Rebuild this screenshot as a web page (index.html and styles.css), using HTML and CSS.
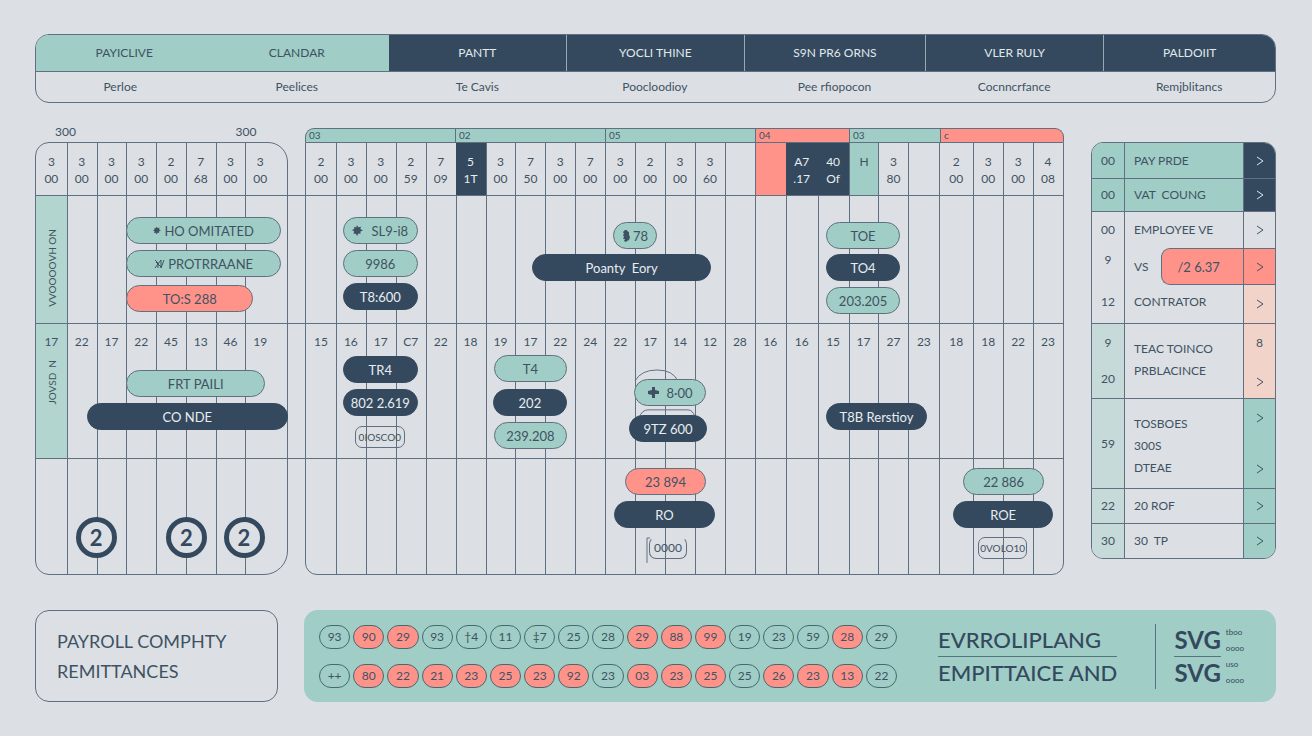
FILE: index.html
```html
<!DOCTYPE html>
<html lang="en">
<head>
<meta charset="utf-8">
<meta name="viewport" content="width=device-width, initial-scale=1">
<title>Payroll calendar</title>
<link rel="stylesheet" href="styles.css">
</head>
<body>
<svg class="defs" aria-hidden="true">
  <symbol id="chevron" viewBox="0 0 8 10"><path d="M1 1l6 4-6 4" fill="none" stroke="currentColor" stroke-width="1"/></symbol>
  <symbol id="spark" viewBox="0 0 10 10"><path d="M4.500 0l1.200 2 2.500-.3-.6 2L10 4.900l-2.400 1 .2 2-2-.2L4.600 10 3.500 7.900l-2.200.1.700-2L0 4.600l2-.9L2 1.700l1.800.5z" fill="currentColor"/></symbol>
</svg>
<div class="page">
  <table class="phases">
    <colgroup><col class="c-a"><col class="c-a"><col class="c-a"><col class="c-b"><col class="c-c"><col class="c-b"><col></colgroup>
    <thead><tr>
      <th class="green">PAYICLIVE</th><th class="green">CLANDAR</th><th>PANTT</th><th>YOCLI THINE</th><th>S9N PR6 ORNS</th><th>VLER RULY</th><th>PALDOIIT</th>
    </tr></thead>
    <tbody><tr>
      <td>Perloe</td><td>Peelices</td><td>Te Cavis</td><td>Poocloodioy</td><td>Pee rfiopocon</td><td>Cocnncrfance</td><td>Remjblitancs</td>
    </tr></tbody>
  </table>

  <main class="main">
    <section class="panel panel-left">
      <div class="marks cols"><span>300</span><span>300</span></div>
      <div class="board">
        <div class="rules cols"><i></i><i></i><i></i><i></i><i></i><i></i><i></i><i></i></div>
        <div class="head cols">
          <span>3<br>00</span><span>3<br>00</span><span>3<br>00</span><span>3<br>00</span><span>2<br>00</span><span>7<br>68</span><span>3<br>00</span><span>3<br>00</span>
        </div>
        <div class="band band-one"><div class="side-label"><span>VVOOOOVH ON</span></div></div>
        <div class="band band-two">
          <div class="side-label"><span>JOVSD &nbsp;N</span></div>
          <div class="days cols"><span>17</span><span>22</span><span>17</span><span>22</span><span>45</span><span>13</span><span>46</span><span>19</span></div>
        </div>
        <div class="band band-three"></div>
        <div class="bar" style="--x:91;--w:156;--y:74"><svg class="ic-s"><use href="#spark"/></svg>HO OMITATED</div>
        <div class="bar" style="--x:91;--w:156;--y:107"><svg class="ic-n" viewBox="0 0 11 12"><path d="M1 2l3 3v5M1 10l6-8v8L10 2M2 4l5 5" fill="none" stroke="currentColor"/></svg>PROTRRAANE</div>
        <div class="bar coral" style="--x:91;--w:128;--y:142">TO:S 288</div>
        <div class="bar" style="--x:91;--w:140;--y:227">FRT PAILI</div>
        <div class="bar navy" style="--x:51;--w:203;--y:260">CO NDE</div>
        <div class="ring" style="--x:40;--y:374">2</div>
        <div class="ring" style="--x:131;--y:374">2</div>
        <div class="ring" style="--x:189;--y:374">2</div>
      </div>
    </section>

    <section class="panel panel-right">
      <div class="weeks cols">
        <span class="w5">03</span><span class="w5">02</span><span class="w5">05</span><span class="w3 coral">04</span><span class="w3">03</span><span class="w4 coral">c</span>
      </div>
      <div class="board">
        <div class="rules cols"><i></i><i></i><i></i><i></i><i></i><i></i><i></i><i></i><i></i><i></i><i></i><i></i><i></i><i></i><i></i><i></i><i></i><i></i><i></i><i></i><i></i><i></i><i></i><i></i><i></i></div>
        <div class="head cols">
          <span>2<br>00</span><span>3<br>00</span><span>3<br>00</span><span>2<br>59</span><span>7<br>09</span><span class="navy">5<br>1T</span><span>3<br>00</span><span>7<br>50</span><span>3<br>00</span><span>7<br>00</span><span>3<br>00</span><span>2<br>00</span><span>3<br>00</span><span>3<br>60</span><span></span><span class="coral"></span><span class="navy">A7<br>.17</span><span class="navy">40<br>Of</span><span class="green">H</span><span>3<br>80</span><span></span><span>2<br>00</span><span>3<br>00</span><span>3<br>00</span><span>4<br>08</span>
        </div>
        <div class="band band-one"></div>
        <div class="band band-two">
          <div class="days cols"><span>15</span><span>16</span><span>17</span><span>C7</span><span>22</span><span>18</span><span>19</span><span>17</span><span>22</span><span>24</span><span>22</span><span>17</span><span>14</span><span>12</span><span>28</span><span>16</span><span>16</span><span>15</span><span>17</span><span>27</span><span>23</span><span>18</span><span>18</span><span>22</span><span>23</span></div>
        </div>
        <div class="band band-three"></div>

        <div class="bar spread" style="--x:37;--w:75;--y:74"><svg class="ic-m"><use href="#spark"/></svg>SL9-i8</div>
        <div class="bar" style="--x:37;--w:75;--y:107">9986</div>
        <div class="bar navy" style="--x:37;--w:75;--y:140">T8:600</div>
        <div class="bar navy" style="--x:227;--w:179;--y:111">Poanty &nbsp;Eory</div>
        <div class="bar" style="--x:308;--w:44;--y:79"><svg class="ic-t" viewBox="0 0 8 12"><path d="M3 0h2v1l2 1v3l1 2-1 3-2 1-1 1-2-1 1-2-2 0 1-2-1-2 1-1-1-2z" fill="currentColor"/></svg>78</div>
        <div class="bar" style="--x:521;--w:75;--y:79">TOE</div>
        <div class="bar navy" style="--x:521;--w:75;--y:111">TO4</div>
        <div class="bar" style="--x:521;--w:75;--y:144">203.205</div>

        <div class="bar navy" style="--x:37;--w:75;--y:213">TR4</div>
        <div class="bar navy" style="--x:37;--w:75;--y:246">802 2.619</div>
        <div class="note" style="--x:49;--w:50;--y:283">0IOSCO0</div>
        <div class="bar" style="--x:188;--w:74;--y:212">T4</div>
        <div class="bar navy" style="--x:187;--w:75;--y:246">202</div>
        <div class="bar" style="--x:188;--w:74;--y:279">239.208</div>
        <svg class="arcs" style="--x:329;--w:72;--y:226" viewBox="0 0 72 50"><path d="M1 12Q7 1 23 1T44 12M5 49Q8 41 14 41H54Q59 41 61 48" fill="none" stroke="currentColor"/></svg>
        <div class="bar spread" style="--x:329;--w:72;--y:236"><svg class="ic-m" viewBox="0 0 11 11"><path d="M4 0h3v3l4 1v3H7v4H4V8L0 7V4l4-1z" fill="currentColor"/></svg>8·00</div>
        <div class="bar navy" style="--x:324;--w:78;--y:272">9TZ 600</div>
        <div class="bar navy" style="--x:521;--w:102;--y:260">T8B Rerstioy</div>

        <div class="bar coral" style="--x:320;--w:81;--y:325">23 894</div>
        <div class="bar navy" style="--x:309;--w:101;--y:358">RO</div>
        <svg class="arcs stem" style="--x:341;--w:5;--y:394" viewBox="0 0 5 26"><path d="M4 1H1v25" fill="none" stroke="currentColor"/></svg>
        <div class="note open" style="--x:344;--w:38;--y:394">0000</div>
        <div class="bar" style="--x:659;--w:81;--y:325">22 886</div>
        <div class="bar navy" style="--x:649;--w:100;--y:358">ROE</div>
        <div class="note" style="--x:674;--w:49;--y:394">0VOLO10</div>
      </div>
    </section>

    <aside class="list">
      <div class="row short top"><b>00</b><p>PAY PRDE</p><button aria-label="Open pay prde"><svg><use href="#chevron"/></svg></button></div>
      <div class="row snug top"><b>00</b><p>VAT &nbsp;COUNG</p><button aria-label="Open vat coung"><svg><use href="#chevron"/></svg></button></div>
      <div class="row"><b>00</b><p>EMPLOYEE VE</p><button aria-label="Open employee ve"><svg><use href="#chevron"/></svg></button></div>
      <div class="row join"><b class="raised">9</b><p>VS <span class="amount">/2 6.37</span></p><button class="coral" aria-label="Open vs"><svg><use href="#chevron"/></svg></button></div>
      <div class="row join tall"><b>12</b><p>CONTRATOR</p><button class="peach" aria-label="Open contrator"><svg><use href="#chevron"/></svg></button></div>
      <div class="row two tint"><b><span>9</span><span>20</span></b><p>TEAC TOINCO<br>PRBLACINCE</p><button class="peach" aria-label="Open teac toinco"><span>8</span><svg><use href="#chevron"/></svg></button></div>
      <div class="row three tint"><b>59</b><p>TOSBOES<br>300S<br>DTEAE</p><button class="green" aria-label="Open tosboes"><svg><use href="#chevron"/></svg><svg><use href="#chevron"/></svg></button></div>
      <div class="row short tint"><b>22</b><p>20 ROF</p><button class="green" aria-label="Open 20 rof"><svg><use href="#chevron"/></svg></button></div>
      <div class="row short tint"><b>30</b><p>30 &nbsp;TP</p><button class="green" aria-label="Open 30 tp"><svg><use href="#chevron"/></svg></button></div>
    </aside>
  </main>

  <footer class="foot">
    <h1 class="title">PAYROLL COMPHTY<br>REMITTANCES</h1>
    <div class="summary">
      <div class="chips">
        <span>93</span><span class="coral">90</span><span class="coral">29</span><span>93</span><span>†4</span><span>11</span><span>‡7</span><span>25</span><span>28</span><span class="coral">29</span><span class="coral">88</span><span class="coral">99</span><span>19</span><span>23</span><span>59</span><span class="coral">28</span><span>29</span>
        <span>++</span><span class="coral">80</span><span class="coral">22</span><span class="coral">21</span><span class="coral">23</span><span class="coral">25</span><span class="coral">23</span><span class="coral">92</span><span>23</span><span class="coral">03</span><span class="coral">23</span><span class="coral">25</span><span>25</span><span class="coral">26</span><span class="coral">23</span><span class="coral">13</span><span>22</span>
      </div>
      <div class="brand"><p>EVRROLIPLANG</p><p>EMPITTAICE AND</p></div>
      <div class="formats">
        <div class="svgs"><p>SVG</p><p>SVG</p></div>
        <div class="tiny"><span>tboo</span><span>oooo</span><span>uso</span><span>oooo</span></div>
      </div>
    </div>
  </footer>
</div>
</body>
</html>
```

FILE: styles.css
```css
:root {
  --bg: #dce0e4;
  --green: #a0cdc5;
  --navy: #34495e;
  --coral: #ff938a;
  --peach: #f1d3c9;
  --ink: #3f5263;
  --line: #607080;
}
* { box-sizing: border-box; }
body {
  margin: 0;
  background: var(--bg);
  color: var(--ink);
  font: 13px/16px Lato, "Open Sans", sans-serif;
}
p, h1 { margin: 0; }
.defs { position: absolute; width: 0; height: 0; }
.page { padding: 34px 36px 34px 35px; }
.green { background: var(--green); }
.coral { background: var(--coral); }
.peach { background: var(--peach); }
.navy { background: var(--navy); color: #e8edf1; }

/* Phase table */
.phases {
  width: 100%;
  table-layout: fixed;
  border-collapse: separate;
  border-spacing: 0;
  border: 1px solid var(--line);
  border-radius: 14px;
  overflow: hidden;
  text-align: center;
  font-size: 12px;
}
.c-a { width: 14.25%; }
.c-b { width: 14.4%; }
.c-c { width: 14.6%; }
.phases th {
  height: 36px;
  padding: 0;
  font-weight: 400;
  background: var(--navy);
  color: #e1e7ec;
  border-left: 1px solid #9aa8b4;
}
.phases th.green { background: var(--green); color: var(--ink); border-left: 0; }
.phases th.green + th:not(.green) { border-left: 0; }
.phases td { height: 31px; padding: 0; border-top: 1px solid var(--line); }
.phases th:nth-child(2), .phases td:nth-child(-n+2) { padding-right: 8px; }

/* Calendar panels */
.main { display: flex; align-items: flex-start; margin-top: 25px; }
.panel { min-width: 0; }
.panel-left { flex: 253 1 0; --span: 253; margin-right: 17px; }
.panel-right { flex: 759 1 0; --span: 759; margin-right: 27px; }
.cols { display: grid; }
.panel-left .cols { grid-template-columns: 31fr repeat(6, 30fr) 42fr; }
.panel-right .cols { grid-template-columns: repeat(15, 30fr) 31fr 32fr 31fr 30fr 30fr 31fr 34fr 30fr 30fr 30fr; }
.marks { height: 14px; line-height: 8px; font-size: 12px; text-align: center; }
.marks span:first-child { grid-column: 1 / 3; }
.marks span:last-child { grid-column: 7 / 9; padding-right: 12px; }
.weeks { height: 14px; font-size: 10px; line-height: 13px; }
.weeks span {
  padding-left: 3px;
  border: solid var(--line);
  border-width: 1px 0 0 1px;
  background: var(--green);
}
.weeks span:first-child { border-top-left-radius: 9px; }
.weeks span:last-child { border-top-right-radius: 9px; border-right-width: 1px; }
.weeks .coral { background: var(--coral); }
.w5 { grid-column: span 5; }
.w4 { grid-column: span 4; }
.w3 { grid-column: span 3; }
.board { position: relative; border: 1px solid var(--line); }
.panel-left .board { border-radius: 14px 20px 24px 14px; }
.panel-right .board { border-radius: 0 0 12px 12px; }
.rules { position: absolute; inset: 0; }
.rules i + i { border-left: 1px solid var(--line); }
.head { position: relative; height: 52px; text-align: center; line-height: 17px; font-size: 12px; }
.head span { padding-top: 10px; }
.panel-left .head span:last-child, .panel-left .days span:last-child { padding-right: 12px; }
.head .coral, .head .green { margin-left: 1px; }
.band { position: relative; display: flex; border-top: 1px solid var(--line); }
.band-one { height: 128px; }
.band-two { height: 135px; }
.band-three { height: 116px; }
.panel-left .band::after {
  content: "";
  position: absolute;
  top: -1px;
  left: 100%;
  width: 18px;
  border-top: 1px solid var(--line);
}
.days { flex: 1; padding-top: 10px; text-align: center; font-size: 12px; }
.side-label {
  width: 12.4%;
  display: flex;
  justify-content: center;
  align-items: center;
  background: #b2d6cf;
}
.side-label span { writing-mode: vertical-rl; transform: rotate(180deg); font-size: 10px; line-height: 12px; padding-top: 0; padding-bottom: 16px; }
.band-one .side-label span { padding: 0; margin-top: 16px; }
.band-two .side-label { position: absolute; inset: 0 auto 0 0; align-items: flex-start; }
.band-two .side-label span { padding: 0; margin-top: 36px; }
.band-two .days { position: relative; }

/* Bars on the timeline */
.bar, .note, .ring, .arcs {
  position: absolute;
  left: calc(var(--x) / var(--span) * 100%);
  top: calc(var(--y) * 1px);
}
.bar, .note {
  width: calc(var(--w) / var(--span) * 100%);
  display: flex;
  justify-content: center;
  align-items: center;
  gap: 3px;
  white-space: nowrap;
  border: 1px solid var(--line);
}
.bar { height: 27px; border-radius: 14px; font-size: 13px; background: var(--green); }
.bar.coral { background: var(--coral); }
.bar.navy { background: var(--navy); border-color: var(--navy); }
.bar.spread { gap: 8px; }
.note { height: 22px; border-radius: 7px; font-size: 10px; }
.note.open { border-top-color: transparent; font-size: 12px; }
.ring {
  width: 41px;
  height: 41px;
  border: 5px solid var(--navy);
  border-radius: 50%;
  background: var(--bg);
  color: var(--navy);
  font: 700 22px/31px Lato, sans-serif;
  text-align: center;
}
.arcs { width: calc(var(--w) / var(--span) * 100%); color: var(--line); }
.ic-s { width: 8px; height: 9px; }
.ic-n { width: 11px; height: 12px; }
.ic-m { width: 11px; height: 11px; }
.ic-t { width: 8px; height: 12px; }

/* Side list */
.list {
  flex: 0 0 185px;
  margin-top: 14px;
  border: 1px solid var(--line);
  border-radius: 12px;
  overflow: hidden;
}
.row { display: grid; grid-template-columns: 32px 1fr 32px; min-height: 37px; border-top: 1px solid var(--line); }
.row:first-child, .row.join { border-top: 0; }
.row.short { min-height: 35px; }
.row.snug { min-height: 33px; }
.row.tall { min-height: 38px; }
.row.tall p, .row.tall b { padding-bottom: 4px; }
.row b { font-weight: 400; font-size: 12px; display: flex; flex-direction: column; align-items: center; justify-content: center; }
.row b.raised { padding-bottom: 14px; }
.row p { display: flex; align-items: center; padding-left: 9px; border-left: 1px solid var(--line); font-size: 12px; line-height: 22px; }
.row button {
  display: flex;
  flex-direction: column;
  align-items: center;
  justify-content: center;
  padding: 0;
  border: 0;
  border-left: 1px solid var(--line);
  background: none;
  color: inherit;
  font: inherit;
  font-size: 12px;
}
.row button svg { width: 8px; height: 10px; }
.row button.coral { background: var(--coral); border-top: 1px solid var(--line); border-bottom: 1px solid var(--line); }
.row button.peach { background: var(--peach); }
.row button.green { background: var(--green); }
.row.top { background: var(--green); }
.row.top button { background: var(--navy); color: #e1e7ec; }
.row.tint b { background: #c5dad9; }
.row.two { min-height: 75px; }
.row.two b, .row.two button { justify-content: space-between; padding: 11px 0; }
.row.three { min-height: 90px; }
.row.three button { justify-content: space-between; padding: 14px 0; }
.row.two p, .row.three p { display: block; padding-top: 14px; }
.amount {
  flex: 1;
  align-self: stretch;
  display: flex;
  align-items: center;
  margin-left: 13px;
  padding-left: 15px;
  border: solid var(--line);
  border-width: 1px 0 1px 1px;
  border-radius: 9px 0 0 9px;
  background: var(--coral);
  font-size: 13px;
}

/* Footer */
.foot { display: flex; gap: 26px; margin-top: 35px; }
.title {
  flex: 0 0 243px;
  padding: 15px 21px;
  border: 1px solid var(--line);
  border-radius: 14px;
  font-size: 18px;
  line-height: 30px;
  font-weight: 400;
}
.summary {
  flex: 1;
  display: flex;
  align-items: center;
  padding: 0 32px 0 15px;
  border-radius: 14px;
  background: var(--green);
}
.chips { flex: 0 1 578px; display: grid; grid-template-columns: repeat(17, 1fr); gap: 15px 3px; }
.chips span { height: 24px; border: 1px solid #446a70; border-radius: 12px; text-align: center; font-size: 12px; line-height: 22px; }
.brand { margin-left: 41px; font-size: 22px; line-height: 32px; font-weight: 500; color: var(--navy); white-space: nowrap; }
.brand p + p, .svgs p + p { border-top: 1px solid #55757e; }
.formats { display: flex; gap: 5px; margin-left: auto; padding-left: 18px; border-left: 1px solid #55757e; color: var(--navy); }
.svgs { font-size: 24px; line-height: 32px; font-weight: 700; }
.tiny { display: flex; flex-direction: column; font-size: 8px; line-height: 16px; }
```
